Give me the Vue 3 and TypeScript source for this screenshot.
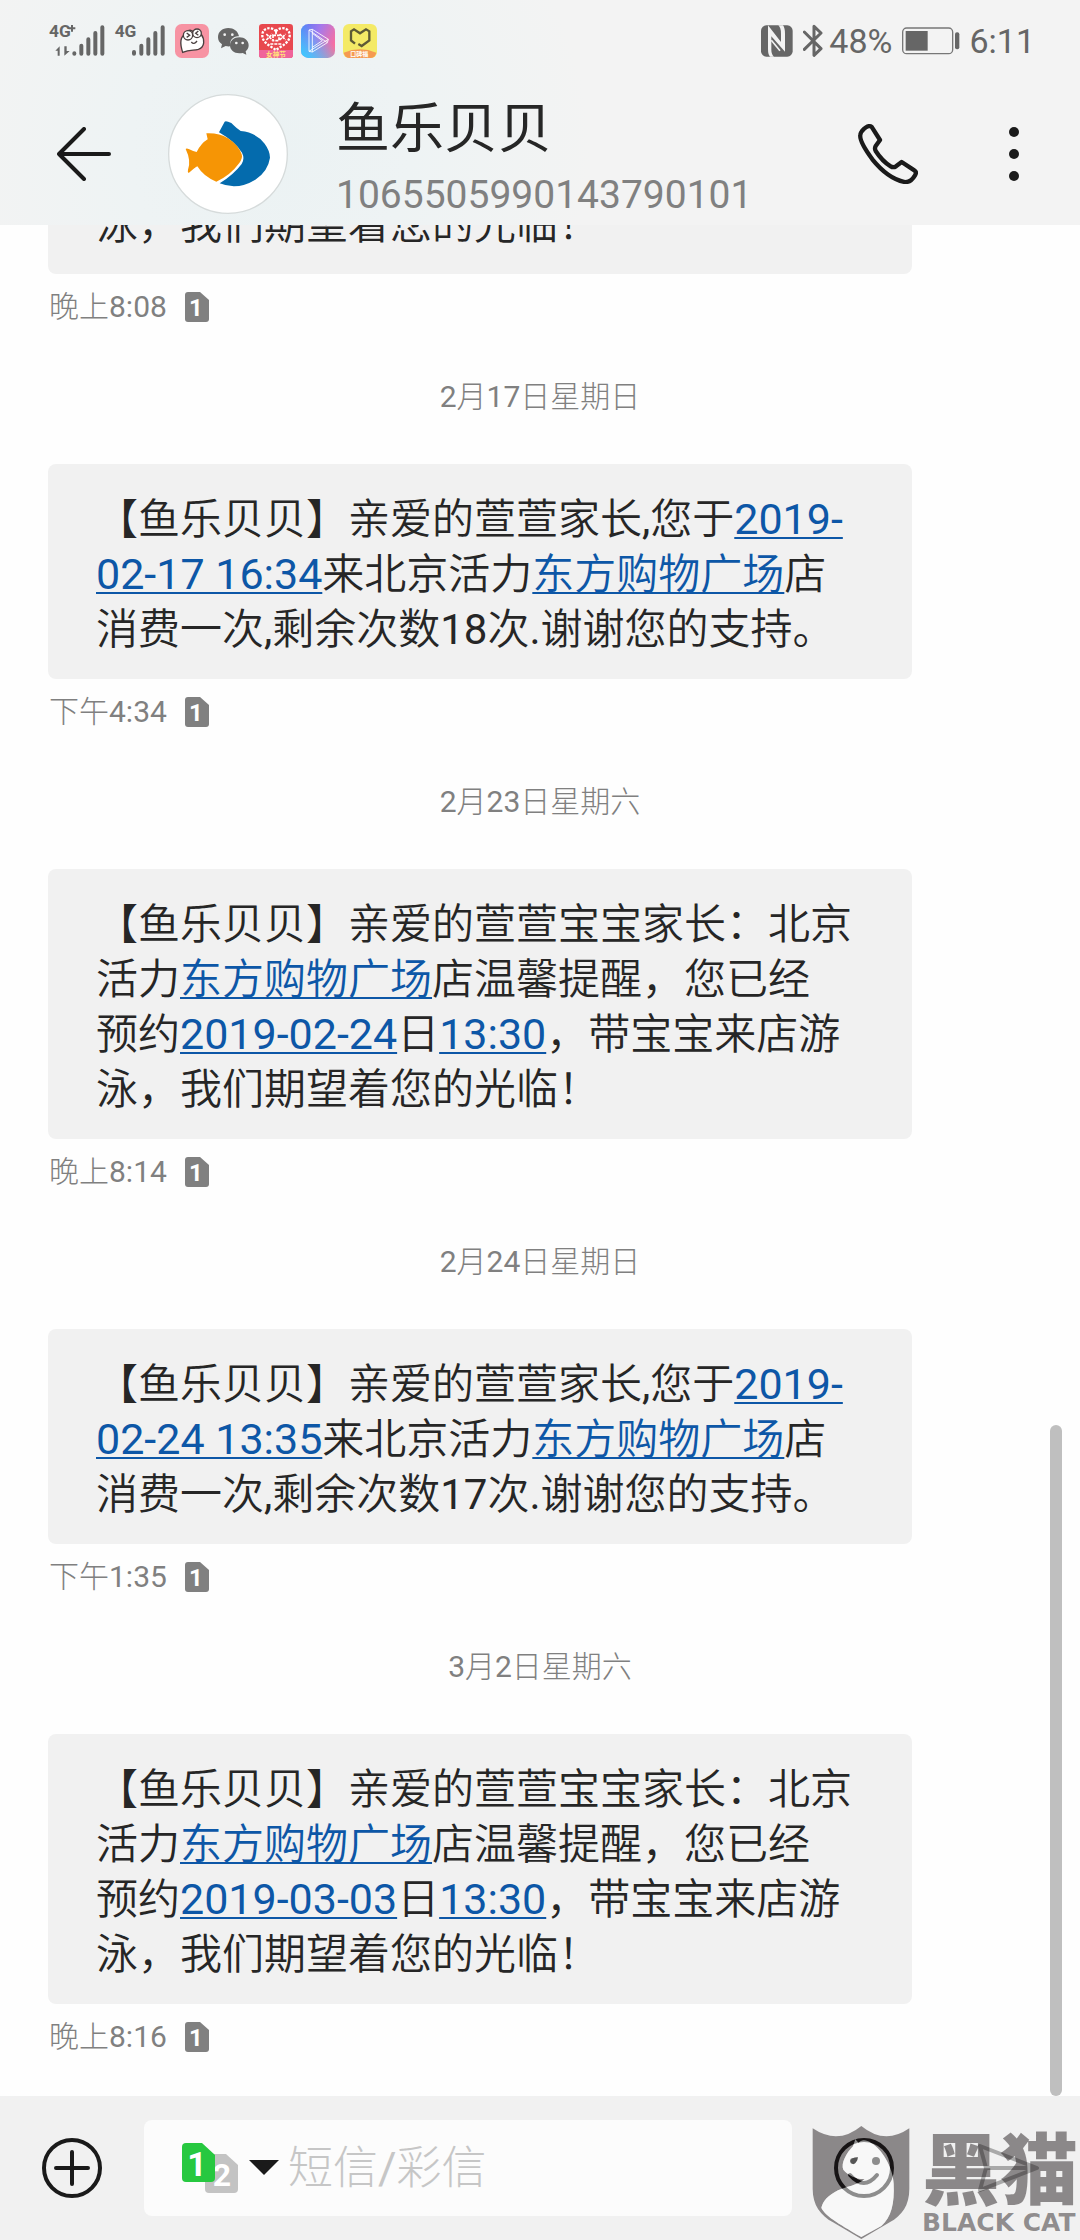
<script setup lang="ts">
import { ref } from 'vue'

interface Part {
  text: string
  kind?: 'when' | 'place'
}

interface Message {
  id: number
  date?: string
  lines: Part[][]
  time: string
}

const t = (text: string): Part => ({ text })
const when = (text: string): Part => ({ text, kind: 'when' })
const place = (text: string): Part => ({ text, kind: 'place' })

const visit = (id: number, date: string, day: string, clock: string, left: number, time: string): Message => ({
  id,
  date,
  time,
  lines: [
    [t('【鱼乐贝贝】亲爱的萱萱家长,您于'), when('2019-')],
    [when(`${day} ${clock}`), t('来北京活力'), place('东方购物广场'), t('店')],
    [t(`消费一次,剩余次数${left}次.谢谢您的支持。`)],
  ],
})

const reminder = (id: number, date: string, day: string, time: string): Message => ({
  id,
  date,
  time,
  lines: [
    [t('【鱼乐贝贝】亲爱的萱萱宝宝家长：北京')],
    [t('活力'), place('东方购物广场'), t('店温馨提醒，您已经')],
    [t('预约'), when(day), t('日'), when('13:30'), t('，带宝宝来店游')],
    [t('泳，我们期望着您的光临！')],
  ],
})

const messages: Message[] = [
  { id: 1, time: '晚上8:08', lines: [[t('泳，我们期望着您的光临！')]] },
  visit(2, '2月17日星期日', '02-17', '16:34', 18, '下午4:34'),
  reminder(3, '2月23日星期六', '2019-02-24', '晚上8:14'),
  visit(4, '2月24日星期日', '02-24', '13:35', 17, '下午1:35'),
  reminder(5, '3月2日星期六', '2019-03-03', '晚上8:16'),
]

const draft = ref('')
</script>

<template>
  <div class="screen">
    <header class="top">
      <div class="status">
        <div class="status-left">
          <svg class="sig" width="56" height="34" viewBox="56 70 168 102">
            <text x="56" y="110" class="net">4G</text>
            <path d="M115 83h20M125 73v20" stroke="#666" stroke-width="6" />
            <path d="M75 150l13-13v28h-6v-15zM102 137h7v14h9l-16 14z" fill="#666" />
            <path d="M132 158v1M153 135v24M174 116v43M195 97v62M216 80v79" class="bars" />
          </svg>
          <svg class="sig second" width="51" height="34" viewBox="254 70 153 102">
            <text x="256" y="110" class="net">4G</text>
            <path d="M314 154v5M336 135v24M357 116v43M378 97v62M400 80v79" class="bars" />
          </svg>
          <svg class="app" viewBox="0 0 102 102">
            <rect width="102" height="102" rx="20" fill="#f793a3" />
            <path d="M23 85C15 60 15 38 31 31C33 18 50 14 56 26C60 14 76 14 78 30C90 46 90 70 70 76C55 80 45 76 23 85z" fill="#fff" stroke="#4a4040" stroke-width="4" />
            <circle cx="39" cy="34" r="14" fill="#fff" stroke="#4a4040" stroke-width="4" />
            <circle cx="66" cy="28" r="13" fill="#fff" stroke="#4a4040" stroke-width="4" />
            <path d="M35 27l9 7-9 6M70 21l-8 7 8 6M49 54q8 10 17-3" fill="none" stroke="#4a4040" stroke-width="4" />
          </svg>
          <svg class="app" viewBox="0 0 102 102">
            <path d="M34 12C15 12 3 24 3 40c0 9 4 16 12 21l-3 12 14-7c4 1 9 2 14 1C36 48 50 35 66 37C63 21 50 12 34 12z" fill="#666" />
            <path d="M67 40c-16 0-28 10-28 24s12 24 28 24c4 0 7 0 10-1l11 5-2-10c6-5 9-11 9-18 0-14-12-24-28-24z" fill="#666" />
            <circle cx="23" cy="32" r="4" fill="#f3f3f3" /><circle cx="46" cy="32" r="4" fill="#f3f3f3" />
            <circle cx="58" cy="57" r="4" fill="#f3f3f3" /><circle cx="77" cy="57" r="4" fill="#f3f3f3" />
          </svg>
          <svg class="app" viewBox="0 0 102 102">
            <rect width="102" height="102" rx="10" fill="#e8484e" />
            <path d="M0 78h102v14q0 10-10 10H10q-10 0-10-10z" fill="#f0639a" />
            <path d="M51 22C40 6 8 10 10 36c1 20 24 30 41 42 17-12 40-22 41-42C94 10 62 6 51 22z" fill="none" stroke="#fff" stroke-width="7" stroke-dasharray="7 4" />
            <path d="M22 30l18 18M22 48l18-18M62 30l18 18M62 48l18-18M34 60h34M51 22v12M42 34h18v16H42z" fill="none" stroke="#fff" stroke-width="5" stroke-dasharray="9 3" />
            <text x="21" y="98" font-size="20" fill="#ffe27a" class="tiny">女神节</text>
          </svg>
          <svg class="app" viewBox="0 0 102 102">
            <defs>
              <linearGradient id="play-bg" x1="0" y1="0.2" x2="1" y2="0.6">
                <stop offset="0" stop-color="#5f78f5" />
                <stop offset="0.45" stop-color="#a479ec" />
                <stop offset="1" stop-color="#fb6f9e" />
              </linearGradient>
              <linearGradient id="play-glow" x1="0" y1="1" x2="0.6" y2="0.3">
                <stop offset="0" stop-color="#35d2ff" />
                <stop offset="1" stop-color="#35d2ff" stop-opacity="0" />
              </linearGradient>
            </defs>
            <rect width="102" height="102" rx="22" fill="url(#play-bg)" />
            <rect width="102" height="102" rx="22" fill="url(#play-glow)" />
            <path d="M24 18l10-2 48 30-3 10-45 28-10-2zM34 16v68M24 82l58-36M24 18l55 38M34 28l30 22-30 20" fill="none" stroke="#fff" stroke-width="3" opacity="0.85" />
          </svg>
          <svg class="app" viewBox="0 0 102 102">
            <rect width="102" height="102" rx="18" fill="#f4ea66" />
            <path d="M36 59l-12-10V22l9-6 18 12 18-12 10 6v27L56 66l-10-6" fill="none" stroke="#5d5a36" stroke-width="7" />
            <path d="M2 86q49-20 98 0-4 16-18 16H20Q6 102 2 86z" fill="#f59a52" />
            <text x="22" y="96" font-size="18" fill="#fff" class="tiny">口碑福</text>
          </svg>
        </div>
        <div class="status-right">
          <svg class="nfc" width="32" height="32" viewBox="0 0 96 96">
            <rect y="1" width="95" height="94" rx="16" fill="#666" />
            <path d="M21 1l39 50V26Q60 8 52 1h14q6 8 6 25v54L31 34v40q0 14 8 21H27q-6-6-6-22z" fill="#f3f3f3" />
            <path d="M31 46l26 31" stroke="#f3f3f3" stroke-width="5" />
          </svg>
          <svg class="bt" width="20" height="34" viewBox="0 0 60 102">
            <path d="M4 24l50 50-21 20V7l21 20L4 76" fill="none" stroke="#666" stroke-width="9" stroke-linejoin="round" stroke-linecap="round" />
          </svg>
          <span class="num">48%</span>
          <svg class="bat" width="58" height="28" viewBox="0 0 174 84">
            <rect x="2" y="3" width="150" height="77" rx="12" fill="none" stroke="#777" stroke-width="4" />
            <rect x="11" y="12" width="66" height="59" fill="#666" />
            <rect x="159" y="16" width="13" height="51" rx="6" fill="#666" />
          </svg>
          <span class="num">6:11</span>
        </div>
      </div>
      <div class="bar">
        <button class="icon back" type="button" aria-label="返回">
          <svg width="54" height="54" viewBox="0 0 54 54">
            <path d="M27 2L2 27l25 25M2 27h50" class="line" />
          </svg>
        </button>
        <svg class="avatar" width="120" height="120" viewBox="0 0 360 360">
          <circle cx="180" cy="180" r="178" fill="#fff" stroke="#d6dbdb" stroke-width="4" />
          <path d="M153 115L170 83Q174 80 190 87Q207 104 218 111Q264 115 290 149Q306 171 306 191Q300 232 262 257Q208 290 155 268Q196 243 221 210Q231 194 222 176Q200 142 153 115z" fill="#046bad" />
          <path d="M115 118Q152 116 180 133Q211 153 221 181Q225 192 214 207Q187 244 145 263Q107 248 88 217Q79 222 62 237Q58 236 60 227Q70 200 53 165Q55 161 64 166Q76 173 86 174Q99 148 119 136z" fill="#f69505" />
        </svg>
        <div class="who">
          <h1>鱼乐贝贝</h1>
          <p>1065505990143790101</p>
        </div>
        <button class="icon" type="button" aria-label="拨打电话">
          <svg width="60" height="60" viewBox="0 0 180 180">
            <path d="M12 21Q28 3 38 7L42 10L66 48L53 66Q49 74 53 81Q73 112 98 127Q106 132 114 127L131 114L169 139Q177 144 171 154Q158 176 140 174Q90 164 43 106Q3 52 7 32Q8 26 12 21z" class="line thick" />
          </svg>
        </button>
        <button class="icon more" type="button" aria-label="更多">
          <svg width="12" height="56" viewBox="0 0 12 56">
            <circle cx="6" cy="6" r="5" /><circle cx="6" cy="28" r="5" /><circle cx="6" cy="50" r="5" />
          </svg>
        </button>
      </div>
    </header>

    <main class="thread">
      <section v-for="m in messages" :key="m.id" class="entry">
        <h2 v-if="m.date" class="date">{{ m.date }}</h2>
        <div class="bubble">
          <p v-for="(line, i) in m.lines" :key="i"><template v-for="(p, j) in line" :key="j"><a v-if="p.kind" href="#" :class="p.kind">{{ p.text }}</a><template v-else>{{ p.text }}</template></template></p>
        </div>
        <div class="meta">
          <time>{{ m.time }}</time>
          <svg width="24" height="30" viewBox="0 0 24 30">
            <path d="M3 0H15L24 8V27Q24 30 21 30H3Q0 30 0 27V3Q0 0 3 0z" fill="#808080" />
            <text x="11" y="24" class="sim-no" font-size="24">1</text>
          </svg>
        </div>
      </section>
      <div class="scroll"></div>
    </main>

    <footer class="composer">
      <button class="icon" type="button" aria-label="添加">
        <svg width="60" height="60" viewBox="0 0 60 60">
          <circle cx="30" cy="30" r="28" class="line" /><path d="M30 14v32M14 30h32" class="line" />
        </svg>
      </button>
      <div class="field">
        <button class="icon sim" type="button" aria-label="选择SIM卡">
          <svg width="97" height="50" viewBox="0 0 97 50">
            <path d="M27 11H44L56 22V46Q56 50 52 50H27Q23 50 23 46V15Q23 11 27 11z" fill="#c3c3c3" />
            <text x="40" y="43" class="sim-no" font-size="32">2</text>
            <path d="M4 0H20L33 12V35Q33 39 29 39H4Q0 39 0 35V4Q0 0 4 0z" fill="#27c840" />
            <text x="15" y="33" class="sim-no" font-size="34">1</text>
            <path d="M67 17H97L82 32z" fill="#1a1a1a" />
          </svg>
        </button>
        <input v-model="draft" type="text" placeholder="短信/彩信" aria-label="短信/彩信" />
      </div>
      <button class="icon emoji" type="button" aria-label="表情">
        <svg width="60" height="60" viewBox="0 0 60 60">
          <circle cx="30" cy="30" r="28" class="line" />
          <circle cx="19" cy="23" r="3" /><circle cx="42" cy="23" r="4" />
          <path d="M16 37q14 16 27 0" class="line" />
        </svg>
      </button>
      <button class="icon send" type="button" aria-label="发送">
        <svg width="62" height="50" viewBox="0 0 62 50">
          <path d="M2 3l57 22L2 47l6-22zM8 25h51" fill="none" stroke="#a9a9a9" stroke-width="4" stroke-linejoin="round" />
        </svg>
      </button>
      <div class="mark">
        <svg width="98" height="115" viewBox="92 134 294 345">
          <path fill-rule="evenodd" fill="#140e10" fill-opacity="0.46" d="M94 144Q170 195 240 137Q310 195 384 144V325C384 375 362 405 325 426L240 476L155 426C118 405 94 375 94 325zM222 177L215 198C195 218 178 250 186 268C200 285 225 297 250 296C232 314 190 320 170 330C140 345 125 362 120 382C130 405 165 426 240 470L300 437C330 410 340 370 337 310C335 260 300 205 270 188C255 178 240 176 232 188z" />
          <path fill="#fff" fill-opacity="0.5" d="M222 177L215 198C195 218 178 250 186 268C200 285 225 297 250 296C232 314 190 320 170 330C140 345 125 362 120 382C130 405 165 426 240 470L300 437C330 410 340 370 337 310C335 260 300 205 270 188C255 178 240 176 232 188z" />
          <path fill="#555" d="M207 242Q212 230 230 231Q228 246 216 252Q209 250 207 242z" />
        </svg>
        <div class="mark-text">
          <span class="mark-cn">黑猫</span>
          <span class="mark-en">BLACK CAT</span>
        </div>
      </div>
    </footer>
  </div>
</template>

<style>
body {
  margin: 0;
}
</style>

<style scoped>
.screen {
  display: flex;
  flex-direction: column;
  height: 100vh;
  overflow: hidden;
  background: #fefefe;
  color: #262626;
  font-family: Roboto, "Noto Sans CJK SC Light", "Noto Sans CJK SC", sans-serif;
}
h1, h2, p {
  margin: 0;
  font-weight: 400;
}
svg {
  display: block;
  flex: none;
}
.top {
  flex: none;
  background: radial-gradient(circle at 270px 150px, #ebf2f3 0, #eef3f4 140px, #f3f3f3 320px);
}
.status {
  display: flex;
  justify-content: space-between;
  align-items: center;
  height: 82px;
  padding: 0 45px 0 49px;
}
.status-left,
.status-right {
  display: flex;
  align-items: center;
}
.sig {
  overflow: visible;
}
.second {
  margin: 0 2px 0 9px;
}
.net {
  font: 700 52px "Liberation Sans Narrow", Roboto, sans-serif;
  fill: #666;
}
.bars {
  fill: none;
  stroke: #666;
  stroke-width: 12;
  stroke-linecap: round;
}
.app {
  width: 34px;
  height: 34px;
  margin-left: 8px;
}
.tiny {
  font-family: "Noto Sans CJK SC", sans-serif;
  font-weight: 700;
}
.bt {
  margin: 0 6px 0 10px;
}
.num {
  font-size: 34px;
  line-height: 40px;
  color: #666;
}
.bat {
  margin: 0 9px 0 10px;
}
.bar {
  display: flex;
  align-items: center;
  height: 143px;
  padding: 0 60px 0 57px;
}
.icon {
  flex: none;
  padding: 0;
  border: 0;
  background: none;
  fill: #1a1a1a;
}
.line {
  fill: none;
  stroke: #1a1a1a;
  stroke-width: 4;
  stroke-linecap: round;
  stroke-linejoin: round;
}
.thick {
  stroke-width: 13;
}
.avatar {
  margin: 0 48px 0 57px;
}
.who {
  flex: 1;
  padding-top: 12px;
}
.who h1 {
  font-family: Roboto, "Noto Sans CJK SC", sans-serif;
  font-size: 54px;
  line-height: 66px;
}
.who p {
  margin-top: 4px;
  font-size: 39px;
  line-height: 56px;
  color: #808080;
}
.more {
  margin-left: 90px;
}
.thread {
  position: relative;
  display: flex;
  flex: 1;
  flex-direction: column;
  justify-content: flex-end;
  min-height: 0;
  overflow: hidden;
  padding-bottom: 39px;
}
.entry {
  flex: none;
}
.date {
  margin: 50px 0 47px;
  font-size: 30px;
  line-height: 40px;
  text-align: center;
  color: #808080;
}
.bubble {
  width: 80%;
  box-sizing: border-box;
  margin-left: 48px;
  padding: 28px 48px 22px;
  border-radius: 8px;
  background: #f1f1f1;
  font-family: Roboto, "Noto Sans CJK SC DemiLight", "Noto Sans CJK SC Light", "Noto Sans CJK SC", sans-serif;
  font-size: 42px;
  line-height: 55px;
  white-space: nowrap;
}
.bubble p {
  height: 55px;
}
.bubble a {
  color: #0d57a7;
  text-decoration: underline 2px;
  text-underline-offset: 3px;
  text-decoration-skip-ink: none;
}
.bubble .when {
  font-size: 43px;
}
.meta {
  display: flex;
  align-items: center;
  gap: 18px;
  margin: 13px 0 0 49px;
  font-size: 30px;
  line-height: 40px;
  color: #808080;
}
.sim-no {
  font-family: Roboto, sans-serif;
  font-weight: 700;
  fill: #fff;
  text-anchor: middle;
}
.scroll {
  position: absolute;
  right: 18px;
  bottom: 0;
  width: 12px;
  height: 671px;
  border-radius: 6px;
  background: #bfbfbf;
}
.composer {
  position: relative;
  display: flex;
  flex: none;
  align-items: center;
  height: 144px;
  padding: 0 40px 0 42px;
  background: #f1f1f1;
}
.field {
  display: flex;
  flex: 1;
  align-items: center;
  min-width: 0;
  height: 96px;
  margin: 0 42px;
  padding-left: 38px;
  border-radius: 8px;
  background: #fcfcfc;
}
.field input {
  flex: 1;
  min-width: 0;
  padding: 0 0 0 9px;
  border: 0;
  outline: 0;
  background: none;
  font: inherit;
  font-size: 45px;
  line-height: 55px;
  color: #262626;
}
.field input::placeholder {
  color: #c6c6c6;
  opacity: 1;
}
.send {
  margin-left: 84px;
}
.mark {
  position: absolute;
  right: 2px;
  bottom: 0;
  display: flex;
  gap: 12px;
  pointer-events: none;
  color: rgba(20, 14, 16, 0.46);
}
.mark-text {
  display: flex;
  flex-direction: column;
  gap: 3px;
}
.mark-cn {
  font-family: "Noto Sans CJK SC", sans-serif;
  font-size: 78px;
  font-weight: 900;
  line-height: 80px;
}
.mark-en {
  font-family: "DejaVu Sans", sans-serif;
  font-size: 25px;
  font-weight: 700;
  line-height: 30px;
  white-space: nowrap;
}
</style>
